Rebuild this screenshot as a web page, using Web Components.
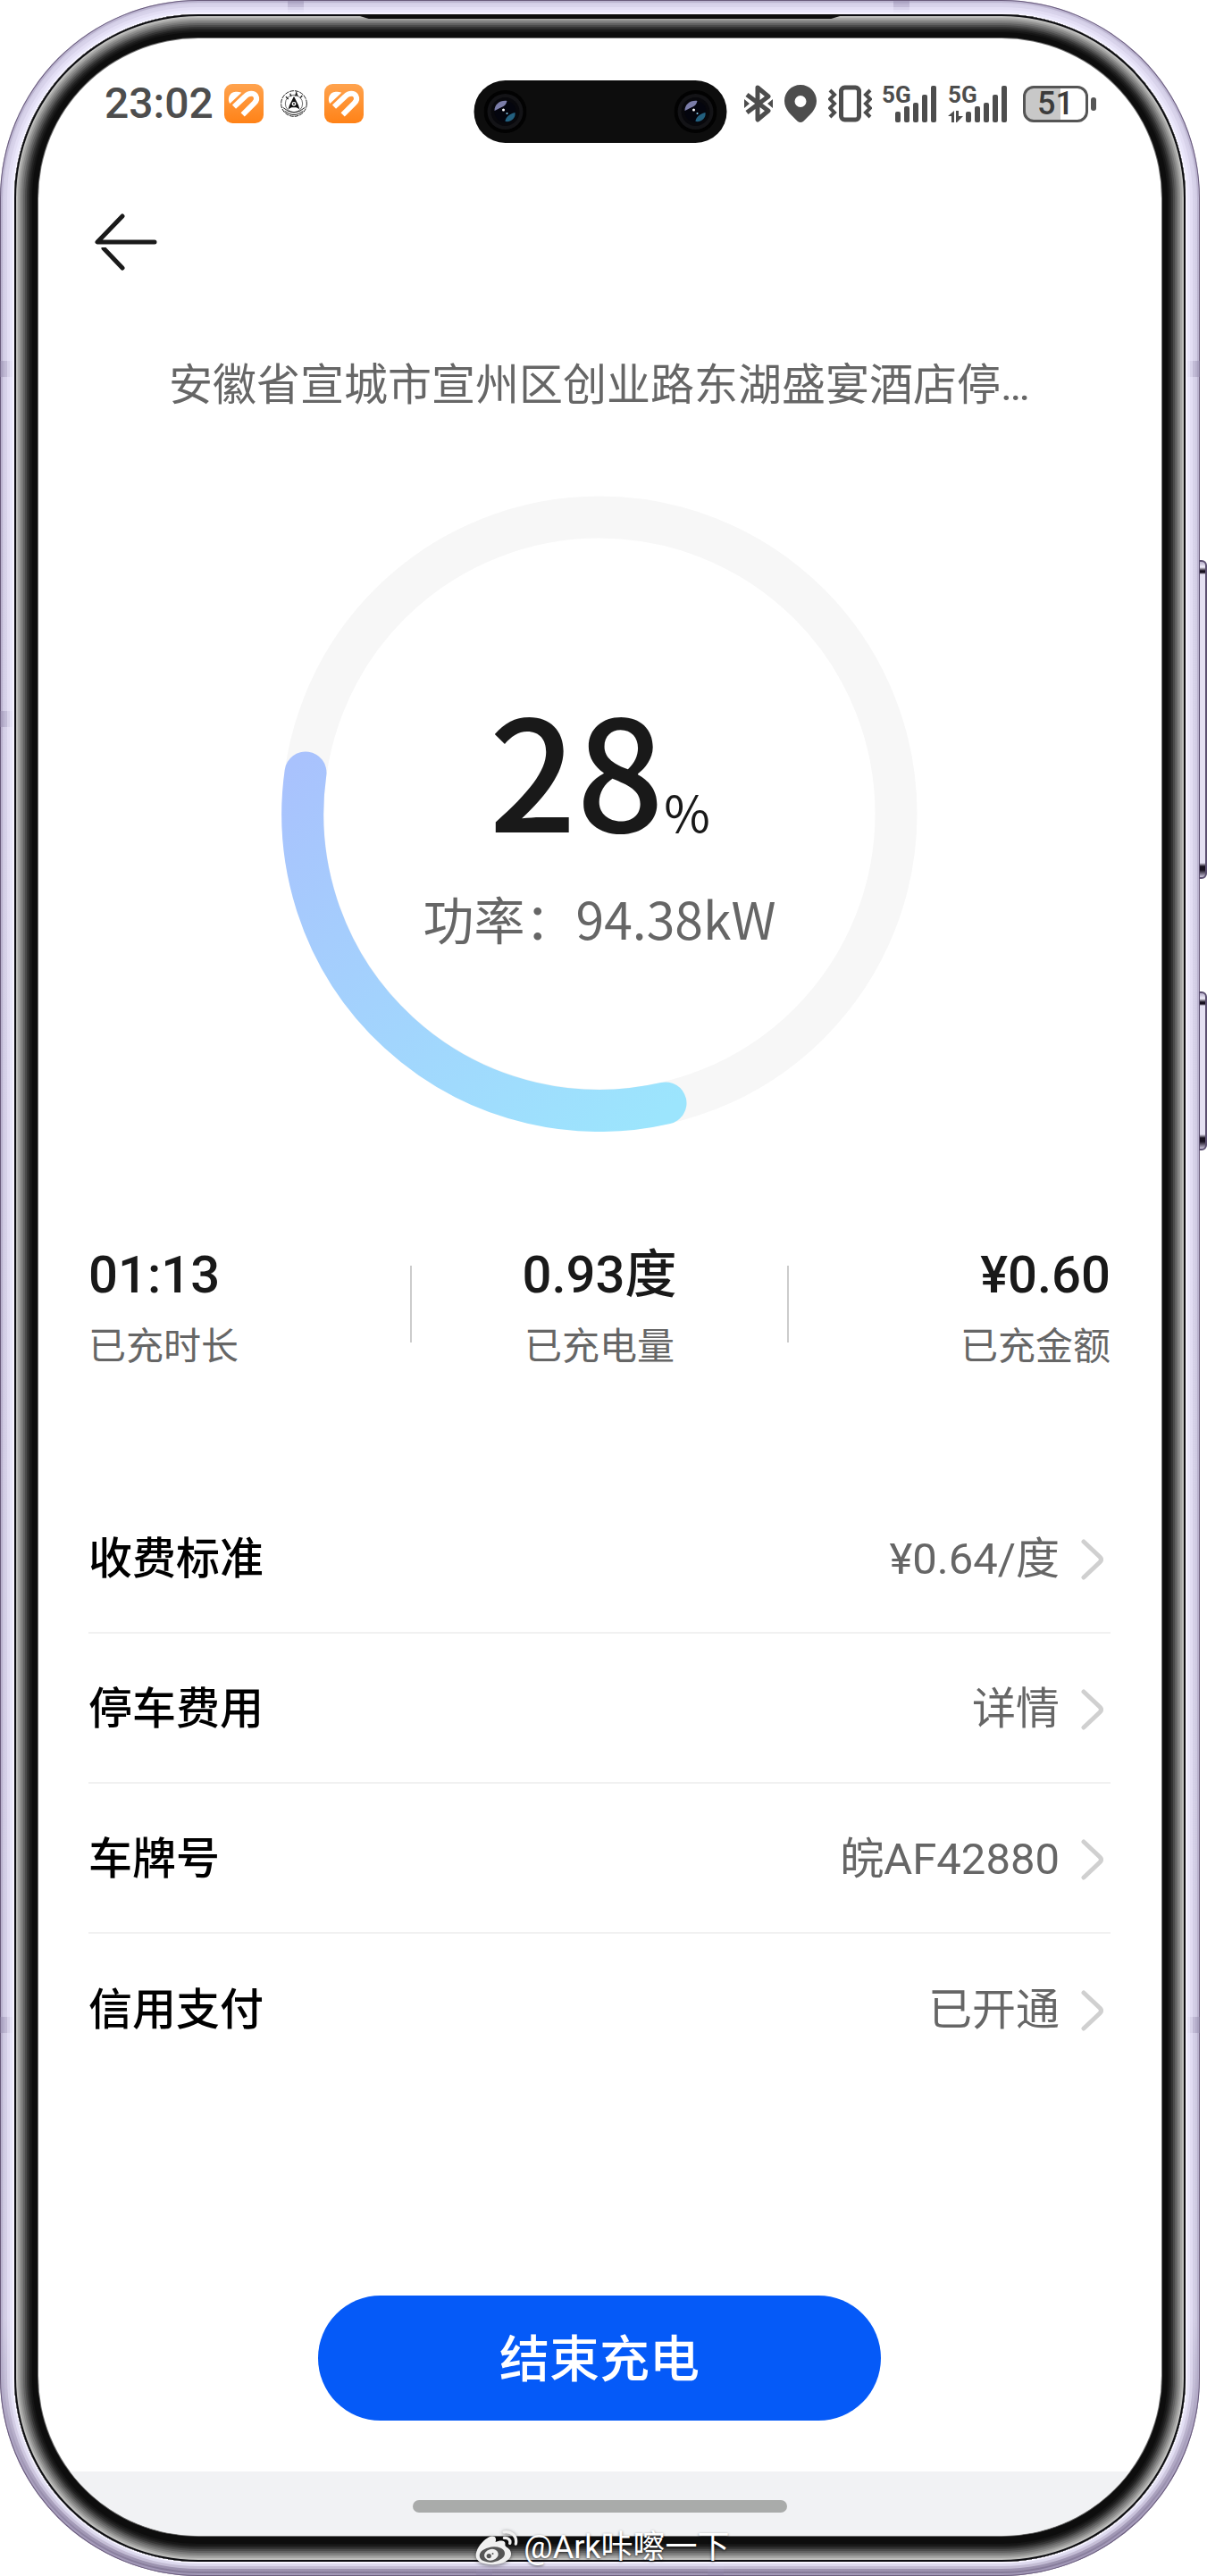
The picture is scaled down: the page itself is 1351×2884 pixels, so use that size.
<!DOCTYPE html>
<html lang="zh-CN">
<head>
<meta charset="utf-8">
<meta name="viewport" content="width=device-width, initial-scale=1">
<title>充电中</title>
<style>
    html, body  { margin: 0; padding: 0; background: #fff; }
    body        { font-family: Roboto, "Noto Sans CJK SC", sans-serif; color: #191919; }
</style>
</head>
<body>

<phone-frame>
    <status-bar slot="status" time="23:02" battery="51"></status-bar>

    <charge-page place="安徽省宣城市宣州区创业路东湖盛宴酒店停…">
        <charge-ring slot="ring" percent="28" power="94.38kW"></charge-ring>

        <charge-stat slot="stats" value="01:13">已充时长</charge-stat>
        <charge-stat slot="stats" value="0.93度">已充电量</charge-stat>
        <charge-stat slot="stats" value="¥0.60">已充金额</charge-stat>

        <info-row label="收费标准">¥0.64/度</info-row>
        <info-row label="停车费用">详情</info-row>
        <info-row label="车牌号">皖AF42880</info-row>
        <info-row label="信用支付">已开通</info-row>

        <pill-button slot="action">结束充电</pill-button>
    </charge-page>

    <home-bar slot="nav"></home-bar>
    <photo-credit slot="credit">@Ark咔嚓一下</photo-credit>
</phone-frame>

<script>
class PhoneFrame extends HTMLElement
{
    constructor() {
        super()
        this._shadow = this.attachShadow({ mode: "open" })
    }

    connectedCallback() {
        this._shadow.innerHTML = `
            <style>
                :host           { display: block; position: relative; padding-right: 8px; overflow: hidden }

                .shell          { position: relative; box-sizing: border-box; min-height: 100vh; padding: 16px; display: flex; border-radius: 222px;
                                  background: linear-gradient(#d3cee6 0, #cdc8e0 90%, #968cab 97%, #857a99 100%);
                                  box-shadow: inset 0 0 0 1px #6a5c7c, inset 0 0 0 3px #b0a6c4aa }
                .bezel          { position: relative; flex: 1; display: flex; padding: 27px 27px 29px; border-radius: 206px; background: #0d0d0d;
                                  box-shadow: 0 0 0 2px #f6f3ff, 0 0 0 5px #efecff99, 0 0 0 8px #efecff77, 0 0 0 11px #efecff33,
                                              inset 0 0 0 2px #0c0c10, inset 0 0 0 4px #bdbdbb, inset 0 0 0 6px #a6a6a5, inset 0 0 0 8px #8f8f8e,
                                              inset 0 0 0 10px #797979, inset 0 0 0 12px #626262, inset 0 0 0 14px #4b4b4b,
                                              inset 0 0 0 16px #343434, inset 0 0 0 18px #222, inset 0 0 0 20px #161616 }
                .screen         { flex: 1; display: flex; flex-direction: column; border-radius: 179px; background: #fff; overflow: hidden; min-width: 0;
                                  box-shadow: 0 0 0 1px #6f6f6f }

                /* earpiece slot */
                .ear            { position: absolute; top: 0; left: 29%; right: 29%; height: 5px; background: #0d0d0d; clip-path: polygon(0 0, 100% 0, 97% 100%, 3% 100%) }

                /* antenna bands and side keys sit on top of the shell */
                .band           { position: absolute; background: #8f84a866; }
                .band.h         { width: 18px; height: 15px }
                .band.v         { width: 15px; height: 18px }
                .key            { position: absolute; right: 0; width: 9px; box-sizing: border-box; border-radius: 0 6px 6px 0; border: 2px solid #5b4f70; border-left: 1px solid #5b4f70;
                                  background: linear-gradient(#b5adc8 0, #f1eefb 6px, #17101f 10px, #17101f 12px, #e4e0f2 14px, #e4e0f2 calc(100% - 16px), #17101f calc(100% - 12px), #17101f calc(100% - 8px), #cfc8e0 100%) }

                .credit         { position: absolute; left: 0; right: 2px; bottom: 11px; display: flex; justify-content: center }
            </style>

            <div class=shell>
                <i class="band h" style="top: 1px; left: 24%"></i>
                <i class="band h" style="top: 1px; right: 24.2%"></i>
                <i class="band h" style="bottom: 1px; left: 39.7%"></i>
                <i class="band h" style="bottom: 1px; right: 39.7%"></i>
                <i class="band v" style="top: 404px; left: 0"></i>
                <i class="band v" style="top: 796px; left: 0"></i>
                <i class="band v" style="bottom: 608px; left: 0"></i>
                <i class="band v" style="top: 404px; right: 0"></i>
                <i class="band v" style="bottom: 608px; right: 0"></i>
                <div class=bezel>
                    <i class=ear></i>
                    <div class=screen>
                        <slot name=status></slot>
                        <slot></slot>
                        <slot name=nav></slot>
                    </div>
                </div>
            </div>
            <i class=key style="top: 627px; height: 357px"></i>
            <i class=key style="top: 1110px; height: 178px"></i>
            <div class=credit><slot name=credit></slot></div>
        `
    }
}

class StatusBar extends HTMLElement
{
    constructor() {
        super()
        this._shadow = this.attachShadow({ mode: "open" })
    }

    connectedCallback() {
        const lens = `
            <svg class=lens viewBox="0 0 48 48">
                <circle cx="24" cy="24" r="24" fill="#020202"/>
                <circle cx="24" cy="24" r="20" fill="#131316"/>
                <circle cx="24" cy="24" r="16" fill="#08080c"/>
                <circle cx="24" cy="24" r="12" fill="#04050e"/>
                <path d="M12 23c0-7 6-12 14-11c-1 4-3 6-6 7s-5 3-8 4z" fill="#9a9bd0" opacity=".8"/>
                <path d="M24 35c7 1 12-4 11-10c-4 1-6 2-8 4s-3 4-3 6z" fill="#2d7fa6" opacity=".75"/>
                <circle cx="22" cy="22" r="1.5" fill="#fff"/>
                <circle cx="26" cy="26" r="1" fill="#8fd0ee"/>
            </svg>`

        const appIcon = `
            <svg width="44" height="44" viewBox="0 0 132 132">
                <defs><linearGradient id="o" x2="0" y2="1"><stop stop-color="#ffa34e"/><stop offset="1" stop-color="#ff8217"/></linearGradient></defs>
                <rect width="132" height="132" rx="28" fill="url(#o)"/>
                <path d="M19 66C9 52 16 27 38 26C46 26 53 27 58 29Z" fill="#fff"/>
                <path d="M33 77L70 42C84 28 100 30 106 40C111 49 107 58 101 64L62 103" fill="none" stroke="#fff" stroke-width="18"/>
            </svg>`

        const bars = `
                <rect x="15" y="30" width="6" height="12" rx="2"/>
                <rect x="25" y="24" width="6" height="18" rx="2"/>
                <rect x="35" y="20" width="6" height="22" rx="2"/>
                <rect x="45" y="11" width="6" height="31" rx="2"/>
                <rect x="55" y="1" width="6" height="41" rx="2"/>`

        this._shadow.innerHTML = `
            <style>
                :host           { position: relative; display: flex; align-items: center; justify-content: space-between; height: 146px;
                                  padding: 0 73px 0 74px; color: #4d4d4d; }
                .left           { display: flex; align-items: center; gap: 19px; }
                .time           { font-size: 48px; line-height: 56px; font-weight: 500; margin-right: -7px }
                .right          { display: flex; align-items: center; fill: #4d4d4d }
                svg             { display: block; flex: none }

                .island         { position: absolute; left: 50%; top: 47px; transform: translateX(-50%); width: 283px; height: 70px; box-sizing: border-box; padding: 0 11px;
                                  display: flex; align-items: center; justify-content: space-between; border-radius: 35px; background: #0d0d0d }
                .lens           { width: 48px; height: 48px }

                .signal         { position: relative; }
                .signal span    { position: absolute; left: 0; top: 0; font-size: 26px; line-height: 22px; font-weight: 700 }
                .battery        { display: flex; align-items: center; gap: 3px; margin-left: 17px }
                .cell           { box-sizing: border-box; width: 73px; height: 41px; border: 3px solid #555; border-radius: 12px; display: flex; align-items: center; justify-content: center;
                                  background: linear-gradient(90deg, #c8c8c8 58%, #fff 58%); font-size: 36px; line-height: 36px; font-weight: 500; color: #3c3c3c }
                .nub            { width: 6px; height: 15px; border-radius: 3px; background: #555 }
            </style>

            <div class=left>
                <span class=time>${this.getAttribute("time")}</span>
                ${appIcon}
                <svg width="30" height="30" viewBox="0 0 90 90">
                    <g fill="none" stroke="#222">
                        <circle cx="45" cy="45" r="43" stroke-width="3" stroke-dasharray="14 3"/>
                        <circle cx="45" cy="45" r="29" stroke-width="2"/>
                        <path d="M8 58Q45 92 82 58M14 70Q45 96 76 70" stroke-width="3"/>
                        <path d="M18 22l8 8M32 11l4 10M50 20l3-11l4 11M66 26l7-8" stroke-width="4"/>
                    </g>
                    <path d="M45 20L60 50L64 64L53 58L37 58L26 64L30 50Z" fill="#111"/>
                    <circle cx="45" cy="46" r="7" fill="#fff"/>
                    <circle cx="45" cy="46" r="3" fill="#111"/>
                </svg>
                ${appIcon}
            </div>

            <div class=island>${lens}${lens}</div>

            <div class=right>
                <svg width="32" height="42" viewBox="0 0 32 42">
                    <path d="M3 11L27 29L15 39V3L27 13L3 31" fill="none" stroke="#4d4d4d" stroke-width="5" stroke-linejoin="round"/>
                    <path d="M0 16L6 21L0 26ZM32 16L26 21L32 26Z"/>
                </svg>
                <svg style="margin-left: 13px" width="36" height="42" viewBox="0 0 36 42">
                    <path fill-rule="evenodd" d="M18 0C8 0 0 8 0 18C0 28 8 34 15 41Q18 43 21 41C28 34 36 28 36 18C36 8 28 0 18 0ZM18 12A6.5 6.5 0 1 1 18 25A6.5 6.5 0 1 1 18 12Z"/>
                </svg>
                <svg style="margin-left: 13px" width="49" height="42" viewBox="0 0 49 42">
                    <rect x="14.500" y="3" width="20" height="36" rx="4" fill="none" stroke="#4d4d4d" stroke-width="5"/>
                    <path d="M2 6L7 11L2 16L7 21L2 26L7 31L2 36M47 6L42 11L47 16L42 21L47 26L42 31L47 36" fill="none" stroke="#4d4d4d" stroke-width="4"/>
                </svg>
                <div class=signal style="margin-left: 11px">
                    <span>5G</span>
                    <svg width="62" height="42" viewBox="0 0 62 42">${bars}</svg>
                </div>
                <div class=signal style="margin-left: 12px">
                    <span>5G</span>
                    <svg width="67" height="42" viewBox="0 0 67 42">
                        <g transform="translate(5 0)">${bars}</g>
                        <path d="M0 35L7 29V42H4V35ZM9 29H12V35H17L10 42H9Z"/>
                    </svg>
                </div>
                <div class=battery>
                    <div class=cell>${this.getAttribute("battery")}</div>
                    <i class=nub></i>
                </div>
            </div>
        `
    }
}

class ChargePage extends HTMLElement
{
    constructor() {
        super()
        this._shadow = this.attachShadow({ mode: "open" })
    }

    connectedCallback() {
        this._shadow.innerHTML = `
            <style>
                :host           { flex: 1; display: flex; flex-direction: column; padding: 0 57px 57px 56px; }
                header          { display: flex; align-items: center; height: 164px; }
                .back           { margin: 0; padding: 0 7px; border: 0; background: none; cursor: pointer }
                .back svg       { display: block }
                h1              { margin: 50px 0 94px; font-size: 49px; line-height: 58px; font-weight: 400; color: #666; text-align: center; white-space: nowrap }
                .stats          { display: grid; grid-template-columns: 6fr 7fr 6fr; margin: 125px 0 123px; }
                .action         { margin-top: auto; padding-top: 60px; display: flex; justify-content: center }

                ::slotted(charge-stat:nth-of-type(2)) { align-items: center }
                ::slotted(charge-stat:nth-of-type(3)) { align-items: flex-end; }
                ::slotted(info-row:not(:nth-last-of-type(1))) { border-bottom: 2px solid #f1f1f1 }
            </style>

            <header>
                <button class=back aria-label="返回">
                    <svg width="70" height="64" viewBox="0 0 70 64">
                        <g fill="none" stroke="#1a1a1a" stroke-width="5" stroke-linecap="round" stroke-linejoin="round">
                            <path d="M31 3L3 32H67"/>
                            <path d="M10 39L31 61"/>
                        </g>
                        <path d="M4 35H14V38H4Z" fill="#fff"/>
                    </svg>
                </button>
            </header>
            <h1>${this.getAttribute("place")}</h1>
            <slot name=ring></slot>
            <div class=stats><slot name=stats></slot></div>
            <div class=rows><slot></slot></div>
            <div class=action><slot name=action></slot></div>
        `
    }
}

class ChargeRing extends HTMLElement
{
    constructor() {
        super()
        this._shadow = this.attachShadow({ mode: "open" })
    }

    connectedCallback() {
        this._shadow.innerHTML = `
            <style>
                :host           { display: grid; width: 712px; height: 712px; align-self: center; font-family: "Noto Sans CJK SC", sans-serif }
                svg, .text      { grid-area: 1 / 1 }
                svg             { width: 100%; height: 100% }
                .text           { display: flex; flex-direction: column; align-items: center; padding-top: 199px }
                .percent        { display: flex; align-items: baseline; margin: 0; font-size: 172px; line-height: 206px; font-weight: 500; }
                .percent small  { font-size: 56px; line-height: 58px; font-weight: 400 }
                .power          { margin: 34px 0 0; font-size: 57px; line-height: 66px; color: #666 }
            </style>

            <svg viewBox="0 0 712 712">
                <defs>
                    <linearGradient id="g" gradientUnits="userSpaceOnUse" x1="60" y1="260" x2="430" y2="690">
                        <stop stop-color="#a9c2fd"/><stop offset="1" stop-color="#9ce5fd"/>
                    </linearGradient>
                </defs>
                <circle cx="356" cy="356" r="332" fill="none" stroke="#f7f7f7" stroke-width="47"/>
                <path d="M27 310A332 332 0 0 0 430 680" fill="none" stroke="url(#g)" stroke-width="47" stroke-linecap="round"/>
            </svg>
            <div class=text>
                <p class=percent>${this.getAttribute("percent")}<small>%</small></p>
                <p class=power>功率：${this.getAttribute("power")}</p>
            </div>
        `
    }
}

class ChargeStat extends HTMLElement
{
    constructor() {
        super()
        this._shadow = this.attachShadow({ mode: "open" })
    }

    connectedCallback() {
        this._shadow.innerHTML = `
            <style>
                :host           { position: relative; display: flex; flex-direction: column; gap: 16px; }
                .value          { font-size: 58px; line-height: 70px; font-weight: 500; }
                .label          { font-size: 42px; line-height: 60px; color: #666 }

                /* divider between two stats */
                :host(:not(:nth-of-type(3)))::after { content: ""; position: absolute; right: -1px; top: 25px; bottom: 35px; width: 2px; background: #ccc }
            </style>

            <span class=value>${this.getAttribute("value")}</span>
            <span class=label><slot></slot></span>
        `
    }
}

class InfoRow extends HTMLElement
{
    constructor() {
        super()
        this._shadow = this.attachShadow({ mode: "open" })
    }

    connectedCallback() {
        this._shadow.innerHTML = `
            <style>
                :host           { display: block; box-sizing: border-box; height: 168px; }
                a               { display: flex; align-items: center; box-sizing: border-box; height: 100%; padding: 3px 8px 0 0; font-size: 49px; line-height: 58px; color: #666; text-decoration: none }
                .label          { flex: 1; color: #000; font-weight: 500 }
                svg             { margin-left: 24px; }
            </style>

            <a href="#">
                <span class=label>${this.getAttribute("label")}</span>
                <slot></slot>
                <svg width="25" height="46" viewBox="0 0 25 46"><path d="M3 3L21 20Q24 23 21 26L3 43" fill="none" stroke="#d0d0d0" stroke-width="5" stroke-linecap="round"/></svg>
            </a>
        `
    }
}

class PillButton extends HTMLElement
{
    constructor() {
        super()
        this._shadow = this.attachShadow({ mode: "open" })
    }

    connectedCallback() {
        this._shadow.innerHTML = `
            <style>
                :host           { display: block; }
                button          { width: 630px; height: 140px; margin: 0; padding: 4px 0 0; border: 0; border-radius: 70px; background: #055af8; color: #fff;
                                  font: 500 56px/66px Roboto, "Noto Sans CJK SC", sans-serif; cursor: pointer }
            </style>

            <button><slot></slot></button>
        `
    }
}

class HomeBar extends HTMLElement
{
    constructor() {
        super()
        this._shadow = this.attachShadow({ mode: "open" })
    }

    connectedCallback() {
        this._shadow.innerHTML = `
            <style>
                :host           { display: flex; justify-content: center; height: 40px; padding-top: 32px; background: #f1f2f4 }
                i               { width: 419px; height: 14px; border-radius: 7px; background: #a9abaa }
            </style>

            <i></i>
        `
    }
}

class PhotoCredit extends HTMLElement
{
    constructor() {
        super()
        this._shadow = this.attachShadow({ mode: "open" })
    }

    connectedCallback() {
        this._shadow.innerHTML = `
            <style>
                :host           { display: flex; align-items: center; gap: 6px; font-size: 36px; line-height: 42px; color: #fff; text-shadow: 0 1px 3px #0009 }
                svg             { filter: drop-shadow(0 1px 2px #0008); }
            </style>

            <svg width="48" height="40" viewBox="0 0 145 120">
                <path d="M2 88C2 60 35 24 56 22C70 21 72 32 68 42C84 34 104 36 101 50C98 60 121 60 121 82C121 105 90 118 58 118C25 118 2 108 2 88Z" fill="#f0f0f0"/>
                <ellipse cx="57" cy="84" rx="43" ry="26" fill="#555" transform="rotate(-8 57 84)"/>
                <ellipse cx="54" cy="85" rx="24" ry="19" fill="#f0f0f0" transform="rotate(-15 54 85)"/>
                <circle cx="46" cy="89" r="8" fill="#555"/>
                <circle cx="59" cy="81" r="3" fill="#555"/>
                <path d="M97 8C124 4 142 24 137 48M98 28C110 26 120 34 117 46" fill="none" stroke="#f0f0f0" stroke-width="10" stroke-linecap="round"/>
            </svg>
            <slot></slot>
        `
    }
}

customElements.define('phone-frame', PhoneFrame)
customElements.define('status-bar', StatusBar)
customElements.define('charge-page', ChargePage)
customElements.define('charge-ring', ChargeRing)
customElements.define('charge-stat', ChargeStat)
customElements.define('info-row', InfoRow)
customElements.define('pill-button', PillButton)
customElements.define('home-bar', HomeBar)
customElements.define('photo-credit', PhotoCredit)
</script>
</body>
</html>
